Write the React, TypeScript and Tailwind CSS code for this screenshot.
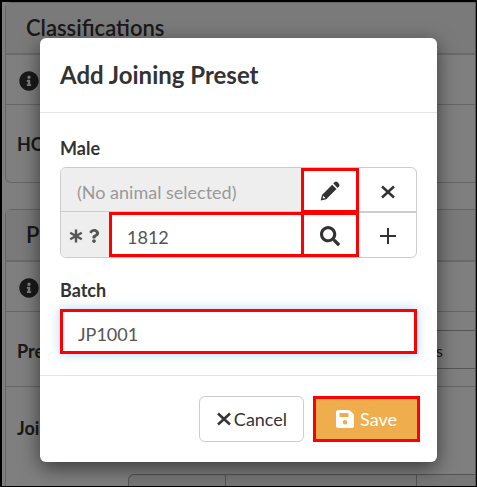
import type { ReactNode } from 'react';
import { FaInfoCircle, FaQuestion, FaSearch } from 'react-icons/fa';

function PencilIcon() {
  return (
    <svg className="size-[22px]" viewBox="0 0 22 22" fill="currentColor" aria-hidden="true">
      <path d="M15.6 2.3a2.1 2.1 0 0 1 2.9 0l1.4 1.4a2.1 2.1 0 0 1 0 2.9l-1.3 1.3-4.3-4.3z" />
      <path
        fillRule="evenodd"
        d="M13.2 4.700l4.3 4.300L7.2 19.2l-5.5 1.3 1.3-5.5zM4.3 15.8l-.6 2.7 2.7-.6z"
      />
    </svg>
  );
}

function CrossIcon() {
  return (
    <svg className="size-4" viewBox="0 0 16 16" stroke="currentColor" strokeWidth="2.5" aria-hidden="true">
      <path d="M2 2.5l12 11M14 2.5l-12 11" />
    </svg>
  );
}

function PlusIcon() {
  return (
    <svg className="size-[18px]" viewBox="0 0 18 18" stroke="currentColor" strokeWidth="2" aria-hidden="true">
      <path d="M9 1v16M1 9h16" />
    </svg>
  );
}

function AsteriskIcon() {
  return (
    <svg className="size-[14px]" viewBox="0 0 14 14" stroke="currentColor" strokeWidth="2.4" aria-hidden="true">
      <path d="M7 .5v13M1.2 3.7l11.6 6.6M12.8 3.7L1.2 10.3" />
    </svg>
  );
}

function DiskIcon() {
  return (
    <svg className="size-[18px]" viewBox="0 0 18 18" fill="currentColor" aria-hidden="true">
      <path
        fillRule="evenodd"
        d="M2.5 0h10q1 0 1.7.7l3.1 3.1q.7.7.7 1.700v10q0 2.500-2.500 2.500h-13Q0 18 0 15.500v-13Q0 0 2.500 0zM3.500 3v3.500q0 .5.5.5h8q.5 0 .5-.5V3.500q0-.5-.5-.5zM9 10a2.300 2.300 0 1 0 0 4.600 2.300 2.300 0 0 0 0-4.600z"
      />
    </svg>
  );
}

function Panel({ title, children }: { title: string; children: ReactNode }) {
  return (
    <section className="ml-[3px] rounded-l-md border border-r-0 border-[#ccc]">
      <h2 className="h-[52px] border-b-2 border-[#d4d4d4] bg-[#f5f5f5] pl-5 text-[22px] leading-[50px] font-semibold">
        {title}
      </h2>
      <div className="flex h-[50px] items-center border-b border-[#ccc] pt-0.5 pl-[13px]">
        <FaInfoCircle className="size-5" />
      </div>
      {children}
    </section>
  );
}

function PageBehind() {
  return (
    <div aria-hidden="true">
      <Panel title="Classifications">
        <div className="h-[77px] pt-[25px] pl-[11px] text-lg leading-7 font-bold">HO</div>
      </Panel>

      <div className="h-[26px]" />

      <Panel title="P">
        <div className="flex h-[75px] items-center justify-between border-b border-[#ccc] pl-[11px]">
          <span className="pt-1 text-lg font-bold">Pre</span>
          <span className="flex h-[39px] w-1/2 items-center justify-end border-y border-[#aaa] pt-1 pr-[33px] text-base">
            s
          </span>
        </div>
        <div className="pt-[27px] pl-[11px]">
          <div className="text-lg leading-7 font-bold">Joi</div>
          <div className="mt-[32px] ml-[111px] flex h-16 rounded-tl-md border border-r-0 border-[#aaa] bg-[#eee]">
            <div className="w-[97px] border-r border-[#aaa]" />
            <div className="flex-1 border-r border-[#aaa]" />
            <div className="w-[59px]" />
          </div>
        </div>
      </Panel>
    </div>
  );
}

function AddJoiningPreset() {
  return (
    <div
      role="dialog"
      aria-labelledby="preset-title"
      className="w-full rounded-md bg-white shadow-[0_6px_20px_rgba(0,0,0,0.55)]"
    >
      <div className="border-b border-[#e5e5e5] px-5 py-5">
        <h1 id="preset-title" className="text-2xl leading-[34px] font-bold">
          Add Joining Preset
        </h1>
      </div>

      <div className="px-5 pt-[21px] pb-[21px] text-lg">
        <label htmlFor="male" className="mb-[5px] block leading-7 font-bold">
          Male
        </label>
        <div className="rounded-md border border-[#ccc]">
          <div className="flex h-[45px] border-b-2 border-[#ccc]">
            <input
              readOnly
              aria-label="Selected animal"
              value="(No animal selected)"
              className="min-w-0 flex-1 rounded-tl-md bg-[#eee] px-4 pt-1 text-[#999]"
            />
            <button
              aria-label="Edit"
              className="relative z-10 flex h-[45px] w-[58px] items-center justify-center border-3 border-[#f00]"
            >
              <PencilIcon />
            </button>
            <button aria-label="Clear" className="flex w-[57px] items-center justify-center pt-1">
              <CrossIcon />
            </button>
          </div>
          <div className="-mt-px flex h-[45px]">
            <span className="flex w-12 items-center justify-center gap-1 rounded-bl-md bg-[#eee] pt-0.5 text-[#555]">
              <AsteriskIcon />
              <FaQuestion className="size-[14px]" />
            </span>
            <input
              id="male"
              defaultValue="1812"
              className="-mr-[3px] min-w-0 flex-1 border-3 border-[#f00] px-[15px] pt-1 text-[#555] outline-none"
            />
            <button
              aria-label="Search"
              className="flex w-[58px] items-center justify-center border-3 border-[#f00] pt-0.5"
            >
              <FaSearch className="size-5" />
            </button>
            <button aria-label="Add" className="flex w-[57px] items-center justify-center pt-0.5">
              <PlusIcon />
            </button>
          </div>
        </div>

        <label htmlFor="batch" className="mt-[18px] mb-[5px] block leading-7 font-bold">
          Batch
        </label>
        <input
          id="batch"
          defaultValue="JP1001"
          className="block h-[45px] w-full border-3 border-[#f00] px-[15px] pt-1 text-[#555] shadow-[0_0_10px_rgba(102,175,233,0.5)] outline-none"
        />
      </div>

      <div className="flex justify-end gap-[9px] border-t border-[#e5e5e5] py-5 pr-[17px] pl-5 text-lg">
        <button className="flex h-[46px] items-center gap-0.5 rounded-md border border-[#ccc] px-4">
          <CrossIcon />
          Cancel
        </button>
        <button className="flex h-[46px] items-center gap-1.5 border-3 border-[#f00] bg-[#f0ad4e] px-5 text-white">
          <DiskIcon />
          Save
        </button>
      </div>
    </div>
  );
}

export default function App() {
  return (
    <main className="relative h-screen overflow-hidden border-t-2 border-r border-b border-l-2 border-black bg-white font-[Lato,sans-serif] text-[#333]">
      <PageBehind />
      <div className="absolute inset-0 border-r border-[#555] bg-black/50 px-[38px] pt-9">
        <AddJoiningPreset />
      </div>
    </main>
  );
}
